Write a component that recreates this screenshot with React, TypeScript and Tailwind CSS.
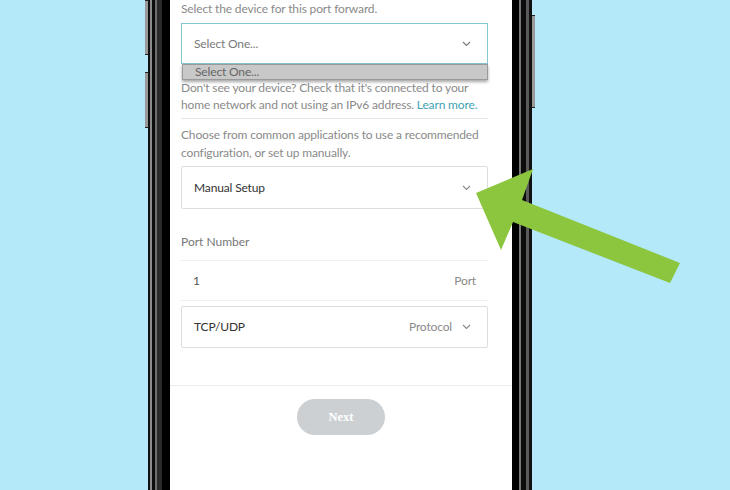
import React from 'react';

const Chevron: React.FC<{ className?: string }> = ({ className = '' }) => (
  <svg className={className} width="9" height="6" viewBox="0 0 9 6" fill="none" stroke="currentColor" strokeWidth={1.1}>
    <path d="M1 1l3.5 3.5L8 1" />
  </svg>
);

const App: React.FC = () => {
  return (
    <div
      className="relative w-[730px] h-[490px] overflow-hidden bg-[#b3e9f8] flex"
      style={{ fontFamily: 'Lato, "Open Sans", sans-serif' }}
    >
      {/* Phone body */}
      <div className="ml-[145px] flex h-full">
        {/* left bezel */}
        <div className="flex h-full">
          <div className="w-[3px] h-full flex flex-col">
            <div className="h-[55px] bg-[#9a9a9a] border-y border-[#222]" />
            <div className="h-[17px]" />
            <div className="h-[56px] bg-[#9a9a9a] border-y border-[#222]" />
          </div>
          <div className="w-[2px] h-full bg-[#111]" />
          <div className="w-[2px] h-full bg-[#8c8c8c]" />
          <div className="w-[3px] h-full bg-[#0c0c0c]" />
          <div className="w-[2px] h-full bg-[#6e6e6e]" />
          <div className="w-[5px] h-full bg-[#2a2a2a]" />
          <div className="w-[8px] h-full bg-black" />
        </div>

        {/* screen */}
        <div className="w-[342px] h-full bg-white flex flex-col text-[#8a8a8a]">
          <div className="pl-[11px] pr-[24px] flex flex-col text-[12px] tracking-[-0.15px]">
            <p className="leading-[17px]">Select the device for this port forward.</p>

            <div className="relative mt-[6px]">
              <div className="h-[41px] border border-[#86c6d1] flex items-center justify-between pl-[12px] pr-[16px]">
                <span className="text-[#7a7a7a]">Select One...</span>
                <Chevron className="text-[#777]" />
              </div>
              <div className="absolute left-[1px] right-0 top-[41px] h-[16px] bg-[#c8c8c8] border border-[#9a9a9a] shadow-[0_2px_3px_rgba(0,0,0,0.35)] flex items-center pl-[12px]">
                <span className="leading-none text-[#666]">Select One...</span>
              </div>
            </div>

            <p className="mt-[15px] leading-[17px] -mr-[3px]">
              Don't see your device? Check that it's connected to your home network and not using an IPv6 address.{' '}
              <span className="text-[#3ea2b1]">Learn more.</span>
            </p>

            <div className="mt-[5px] h-px bg-[#e6e6e6]" />

            <p className="mt-[7px] leading-[18px] -mr-[3px]">
              Choose from common applications to use a recommended configuration, or set up manually.
            </p>

            <div className="mt-[4px] h-[43px] border border-[#dedede] rounded-[2px] flex items-center justify-between pl-[12px] pr-[16px]">
              <span className="text-[#333]">Manual Setup</span>
              <Chevron className="text-[#888]" />
            </div>

            <p className="mt-[24px] leading-[17px] text-[#777] tracking-normal">Port Number</p>

            <div className="mt-[10px] h-[41px] border-y border-[#f0f0f0] flex items-center justify-between pl-[12px] pr-[12px]">
              <span className="text-[#555]">1</span>
              <span className="text-[#8a8a8a]">Port</span>
            </div>

            <div className="mt-[5px] h-[42px] border border-[#dedede] rounded-[2px] flex items-center justify-between pl-[12px] pr-[16px]">
              <span className="text-[#333]">TCP/UDP</span>
              <div className="flex items-center gap-[10px]">
                <span className="text-[#8a8a8a]">Protocol</span>
                <Chevron className="text-[#888]" />
              </div>
            </div>
          </div>

          <div className="mt-[37px] h-px bg-[#ececec]" />

          <div className="mt-[13px] flex justify-center">
            <button
              className="w-[88px] h-[36px] rounded-full bg-[#ccd0d3] text-white text-[12.5px] font-bold"
              style={{ fontFamily: '"Liberation Serif", serif' }}
            >
              Next
            </button>
          </div>
        </div>

        {/* right bezel */}
        <div className="flex h-full">
          <div className="w-[7px] h-full bg-black" />
          <div className="w-[2px] h-full bg-[#777]" />
          <div className="w-[5px] h-full bg-[#0c0c0c]" />
          <div className="w-[3px] h-full bg-[#5a5a5a]" />
          <div className="w-[3px] h-full bg-[#111]" />
          <div className="w-[3px] h-full flex flex-col">
            <div className="h-[15px]" />
            <div className="h-[93px] bg-[#9a9a9a] border-y border-[#222]" />
          </div>
        </div>
      </div>

      {/* pointer arrow */}
      <svg className="absolute inset-0 pointer-events-none" width="730" height="490" viewBox="0 0 730 490">
        <polygon
          points="680,263 670,283 513,222 501,250 476,193 533,169 522,200"
          fill="#8cc63f"
        />
      </svg>
    </div>
  );
};

export default App;
